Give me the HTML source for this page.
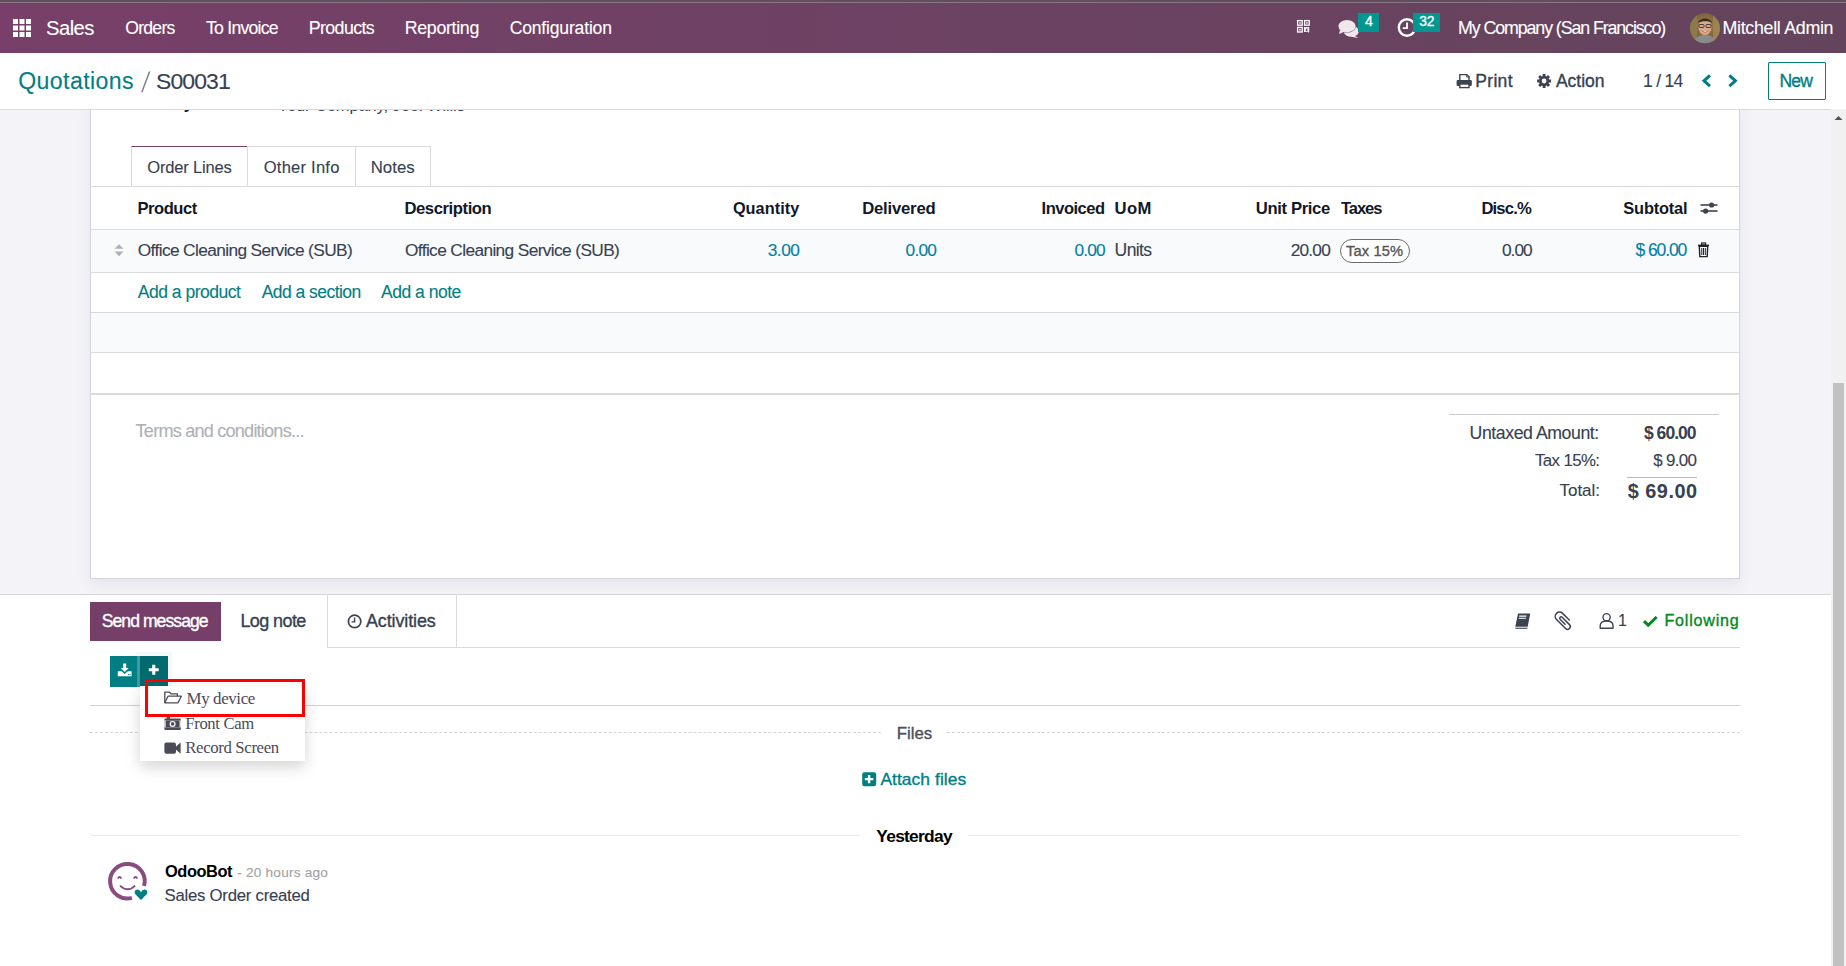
<!DOCTYPE html><html><head><meta charset='utf-8'><style>
*{margin:0;padding:0;box-sizing:border-box}
html,body{width:1846px;height:966px;overflow:hidden;background:#fff;font-family:'Liberation Sans',sans-serif}
.a{position:absolute}
.t{position:absolute;white-space:pre}
svg.a{overflow:visible}
</style></head><body><div class="a" style="left:0px;top:0px;width:1846px;height:2px;background:#634d5f"></div>
<div class="a" style="left:0px;top:2px;width:1846px;height:1px;background:#877883"></div>
<div class="a" style="left:0px;top:3px;width:1846px;height:50px;background:linear-gradient(to right,#773f69,#6d4263 50%,#64445c)"></div>
<svg class="a" style="left:0;top:0" width="40" height="53"><rect x="13.0" y="19.0" width="5" height="5" fill="#fff"/><rect x="13.0" y="25.5" width="5" height="5" fill="#fff"/><rect x="13.0" y="32.0" width="5" height="5" fill="#fff"/><rect x="19.5" y="19.0" width="5" height="5" fill="#fff"/><rect x="19.5" y="25.5" width="5" height="5" fill="#fff"/><rect x="19.5" y="32.0" width="5" height="5" fill="#fff"/><rect x="26.0" y="19.0" width="5" height="5" fill="#fff"/><rect x="26.0" y="25.5" width="5" height="5" fill="#fff"/><rect x="26.0" y="32.0" width="5" height="5" fill="#fff"/></svg>
<svg class="a" style="left:1296px;top:19px" width="16" height="15" viewBox="0 0 16 15">
<g fill="none" stroke="#fff" stroke-width="1.3">
<rect x="1.6" y="1.6" width="4.6" height="4.6"/><rect x="8.6" y="1.6" width="4.6" height="4.6"/><rect x="1.6" y="8.4" width="4.6" height="4.6"/>
</g>
<g fill="#fff"><rect x="3.2" y="3.2" width="1.5" height="1.5"/><rect x="10.2" y="3.2" width="1.5" height="1.5"/><rect x="3.2" y="10" width="1.5" height="1.5"/>
<rect x="8" y="8" width="1.8" height="5"/><rect x="9.8" y="8" width="1.5" height="1.8"/><rect x="11.4" y="8" width="1.8" height="5"/><rect x="9.8" y="12" width="1" height="1"/><rect x="12" y="12.5" width="1" height="1"/></g>
</svg>
<svg class="a" style="left:1336px;top:17px" width="26" height="22" viewBox="0 0 26 22">
<path d="M9 7 C15 6.5 21 9 22.5 13 C23.5 16 21 18.5 19 19 L22.5 21 L15 19.8 C12 19.8 9 18 8 16 Z" fill="#efe9ee"/>
<ellipse cx="11" cy="9.3" rx="8.8" ry="6.4" fill="#6b4561"/>
<ellipse cx="11" cy="9.2" rx="8.5" ry="6.2" fill="#efe9ee"/>
<path d="M4 13 L3 17 L9 14.5 Z" fill="#efe9ee"/>
</svg>
<div class="a" style="left:1358px;top:13px;width:21px;height:18.5px;background:#01968f"></div>
<svg class="a" style="left:1396px;top:16px" width="22" height="22" viewBox="0 0 22 22">
<circle cx="11" cy="11.5" r="8.2" fill="none" stroke="#fff" stroke-width="2.4"/>
<path d="M11 6.5 V12.2 H6.8" fill="none" stroke="#fff" stroke-width="1.8"/>
</svg>
<div class="a" style="left:1413px;top:13px;width:26.5px;height:18.5px;background:#01968f"></div>
<svg class="a" style="left:1689px;top:13px" width="32" height="31" viewBox="0 0 32 31">
<defs><clipPath id="av"><circle cx="16" cy="15.3" r="15"/></clipPath>
<radialGradient id="bgav" cx="0.5" cy="0.4" r="0.7"><stop offset="0" stop-color="#a8834f"/><stop offset="1" stop-color="#5e4a2e"/></radialGradient></defs>
<g clip-path="url(#av)">
<rect x="0" y="0" width="32" height="31" fill="url(#bgav)"/>
<rect x="0" y="0" width="8" height="31" fill="#8c7a4c"/>
<rect x="24" y="0" width="8" height="31" fill="#9a8550"/>
<path d="M4 31 C6 24 10 22 16 22 C22 22 26 24 28 31 Z" fill="#8a8a88"/>
<ellipse cx="16" cy="14" rx="6.5" ry="8" fill="#d9a98e"/>
<path d="M9 10 C10 4 22 4 23 10 C21 7.5 12 7.5 9 10 Z" fill="#3b2d25"/>
<rect x="10" y="11.5" width="5" height="3" rx="1" fill="none" stroke="#333" stroke-width="0.9"/>
<rect x="17" y="11.5" width="5" height="3" rx="1" fill="none" stroke="#333" stroke-width="0.9"/>
<path d="M12.5 18 Q16 20.5 19.5 18" fill="#fff" stroke="#8a4a3a" stroke-width="0.7"/>
</g></svg>
<div class="a" style="left:0px;top:109px;width:1831px;height:485px;background:#f4f3f8"></div>
<div class="a" style="left:90px;top:100px;width:1650px;height:479px;background:#fff;border:1px solid #d3d5db;box-shadow:0 6px 14px rgba(60,60,90,0.07)"></div>
<div class="a" style="left:91px;top:110px;width:1640px;height:7px;overflow:hidden">
<div class="t" style="left:39px;top:-15px;font-size:16.5px;line-height:16.5px;font-weight:700;color:#111827;letter-spacing:-0.2px">Delivery</div>
<div class="t" style="left:186.5px;top:-13px;font-size:16.5px;line-height:16.5px;color:#374151;letter-spacing:-0.1px">Your Company, Joel Willis</div>
</div>
<div class="a" style="left:131px;top:146px;width:117px;height:40px;background:#fff;border:1px solid #d8dadd;border-bottom:none;border-top:1px solid #763f69"></div>
<div class="a" style="left:247px;top:146px;width:109px;height:40px;border:1px solid #d8dadd;border-bottom:none"></div>
<div class="a" style="left:355px;top:146px;width:76px;height:40px;border:1px solid #d8dadd;border-bottom:none"></div>
<div class="a" style="left:91px;top:186px;width:1648px;height:1px;background:#d8dadd"></div>
<div class="a" style="left:91px;top:229px;width:1648px;height:1px;background:#d8dadd"></div>
<div class="a" style="left:91px;top:230px;width:1648px;height:42px;background:#f9fafb"></div>
<div class="a" style="left:91px;top:272px;width:1648px;height:1px;background:#d8dadd"></div>
<div class="a" style="left:91px;top:312px;width:1648px;height:1px;background:#d8dadd"></div>
<div class="a" style="left:91px;top:313px;width:1648px;height:39px;background:#f9fafb"></div>
<div class="a" style="left:91px;top:352px;width:1648px;height:1px;background:#d8dadd"></div>
<div class="a" style="left:91px;top:393px;width:1648px;height:2px;background:#d8dadd"></div>
<svg class="a" style="left:113px;top:243px" width="13" height="15"><path d="M1.5 5.8 L6 1.2 L10.5 5.8 Z M1.5 8.6 L6 13.2 L10.5 8.6 Z" fill="#adb1b9"/></svg>
<div class="a" style="left:1340px;top:239px;width:70px;height:24px;border:1.3px solid #6c6c6c;border-radius:12px;background:#fff"></div>
<svg class="a" style="left:1700px;top:200px" width="19" height="17" viewBox="0 0 19 17">
<rect x="0.5" y="4.2" width="17" height="1.6" fill="#3d4451"/><rect x="0.5" y="10.2" width="17" height="1.6" fill="#3d4451"/>
<circle cx="11.6" cy="5" r="2.6" fill="#3d4451"/><circle cx="5.6" cy="11.1" r="2.6" fill="#3d4451"/>
</svg>
<svg class="a" style="left:1697px;top:242px" width="14" height="16" viewBox="0 0 14 16">
<rect x="1" y="2.6" width="11" height="1.6" fill="#1f2329"/><rect x="4.6" y="1" width="4" height="2" fill="none" stroke="#1f2329" stroke-width="1.2"/>
<path d="M2.3 4.3 H10.7 L10.2 14.6 H2.8 Z" fill="none" stroke="#1f2329" stroke-width="1.4"/>
<rect x="4.3" y="6" width="1" height="7" fill="#1f2329"/><rect x="6" y="6" width="1" height="7" fill="#1f2329"/><rect x="7.8" y="6" width="1" height="7" fill="#1f2329"/>
</svg>
<div class="a" style="left:1449px;top:414px;width:270px;height:1px;background:#c9ccd2"></div>
<div class="a" style="left:1627px;top:477px;width:70px;height:1px;background:#b8bbc2"></div>
<div class="a" style="left:0px;top:53px;width:1846px;height:56px;background:#fff"></div>
<div class="a" style="left:0px;top:109px;width:1846px;height:1px;background:#d8dadd"></div>
<svg class="a" style="left:0;top:53px" width="200" height="56"><line x1="141.8" y1="39.2" x2="149.6" y2="18.4" stroke="#7b7f88" stroke-width="1.5"/></svg>
<svg class="a" style="left:1456px;top:73px" width="17" height="16" viewBox="0 0 17 16">
<path d="M3.8 7 V1.6 H10.8 L13 3.8 V7" fill="none" stroke="#3d4451" stroke-width="1.4"/>
<path d="M10.6 1.2 V4.2 H13.4" fill="none" stroke="#3d4451" stroke-width="0.8"/>
<rect x="0.6" y="7" width="15.2" height="6" rx="1.2" fill="#3d4451"/>
<rect x="3.8" y="11" width="9.2" height="3.6" fill="#fff" stroke="#3d4451" stroke-width="1.4"/>
</svg>
<svg class="a" style="left:1537px;top:74px" width="15" height="15" viewBox="0 0 15 15"><path d="M12.10 5.56 L14.06 5.59 L14.06 8.41 L12.10 8.44 L11.65 9.52 L13.02 10.92 L11.02 12.92 L9.62 11.55 L8.54 12.00 L8.51 13.96 L5.69 13.96 L5.66 12.00 L4.58 11.55 L3.18 12.92 L1.18 10.92 L2.55 9.52 L2.10 8.44 L0.14 8.41 L0.14 5.59 L2.10 5.56 L2.55 4.48 L1.18 3.08 L3.18 1.08 L4.58 2.45 L5.66 2.00 L5.69 0.04 L8.51 0.04 L8.54 2.00 L9.62 2.45 L11.02 1.08 L13.02 3.08 L11.65 4.48 Z M7.1 4.6 A2.4 2.4 0 1 0 7.1 9.4 A2.4 2.4 0 1 0 7.1 4.6 Z" fill="#3d4451" fill-rule="evenodd"/></svg>
<svg class="a" style="left:1700px;top:73px" width="40" height="16" viewBox="0 0 40 16">
<path d="M10 2.4 L4 7.8 L10 13.2" fill="none" stroke="#017e84" stroke-width="3" stroke-linejoin="miter"/>
<path d="M29.4 2.4 L35.4 7.8 L29.4 13.2" fill="none" stroke="#017e84" stroke-width="3" stroke-linejoin="miter"/>
</svg>
<div class="a" style="left:1768px;top:62px;width:58px;height:38px;border:1px solid #017e84;border-radius:1px"></div>
<div class="a" style="left:0px;top:594px;width:1831px;height:372px;background:#fff"></div>
<div class="a" style="left:0px;top:594px;width:1831px;height:1px;background:#d3d5db"></div>
<div class="a" style="left:90px;top:602px;width:131px;height:39px;background:#763f69"></div>
<div class="a" style="left:327px;top:594px;width:1px;height:53px;background:#d8dadd"></div>
<div class="a" style="left:456px;top:594px;width:1px;height:53px;background:#d8dadd"></div>
<div class="a" style="left:327px;top:647px;width:1413px;height:1px;background:#d8dadd"></div>
<svg class="a" style="left:346px;top:613px" width="17" height="17" viewBox="0 0 17 17">
<circle cx="8.6" cy="8.4" r="6.2" fill="none" stroke="#3d4451" stroke-width="1.7"/>
<path d="M8.6 4.6 V8.9 H5.6" fill="none" stroke="#3d4451" stroke-width="1.4"/>
</svg>
<svg class="a" style="left:1513px;top:612px" width="19" height="18" viewBox="0 0 19 18">
<path d="M5 1.6 H17.2 L14.6 15.2 H2.2 Z" fill="#3d4451"/>
<path d="M2.2 15.2 H14.6" stroke="#fff" stroke-width="0.9"/>
<path d="M2.4 16.3 H14.4" stroke="#3d4451" stroke-width="1"/>
<rect x="7" y="3.6" width="7.2" height="1.2" fill="#fff" transform="skewX(-11)"/>
<rect x="7" y="5.8" width="7.2" height="1" fill="#fff" transform="skewX(-11)"/>
</svg>
<svg class="a" style="left:1550px;top:607px" width="26" height="26" viewBox="0 0 26 26">
<path d="M19.23 13.0 L12.59 6.36 A4.3 4.3 0 0 0 6.51 12.45 L15.56 21.5 A2.75 2.75 0 0 0 19.45 17.61 L12.09 10.25 A1.4 1.4 0 0 0 10.11 12.23 L15.06 17.18" fill="none" stroke="#3d4451" stroke-width="1.5" stroke-linecap="round"/>
</svg>
<svg class="a" style="left:1598px;top:612px" width="18" height="18" viewBox="0 0 18 18">
<circle cx="8.6" cy="5.2" r="3.6" fill="none" stroke="#3d4451" stroke-width="1.4"/>
<path d="M2.2 16.3 V13.5 C2.2 10.6 4.8 9 8.6 9 C12.4 9 15 10.6 15 13.5 V16.3 Z" fill="none" stroke="#3d4451" stroke-width="1.4" stroke-linejoin="round"/>
</svg>
<svg class="a" style="left:1642px;top:614px" width="17" height="14" viewBox="0 0 17 14"><path d="M2 7.2 L6.2 11.2 L14.6 3" fill="none" stroke="#00891d" stroke-width="3"/></svg>
<div class="a" style="left:136px;top:652px;width:36px;height:38px;background:#f7f7f8"></div>
<div class="a" style="left:110px;top:656px;width:27px;height:31px;background:#017e84"></div>
<div class="a" style="left:137px;top:656px;width:3px;height:31px;background:#3d9a9e"></div>
<div class="a" style="left:140px;top:656px;width:28px;height:31px;background:#016a6f"></div>
<svg class="a" style="left:116px;top:662px" width="18" height="16" viewBox="0 0 18 16">
<path d="M7.2 1.6 H10.2 V6 H12.6 L8.7 10 L4.8 6 H7.2 Z" fill="#fff"/>
<path d="M1.8 9.2 H5.6 L8.7 12 L11.8 9.2 H15.6 V14.2 H1.8 Z" fill="#fff"/>
<rect x="12" y="12" width="1" height="1" fill="#017e84"/><rect x="13.6" y="12" width="1" height="1" fill="#017e84"/>
</svg>
<svg class="a" style="left:147px;top:663px" width="14" height="14"><path d="M5.2 1.8 H8.3 V5.2 H11.7 V8.3 H8.3 V11.7 H5.2 V8.3 H1.8 V5.2 H5.2 Z" fill="#fff"/></svg>
<div class="a" style="left:90px;top:705px;width:1650px;height:1px;background:#cfd1d6"></div>
<div class="a" style="left:90px;top:732px;width:791px;height:0;border-top:1px dashed #d3d5d9"></div>
<div class="a" style="left:947px;top:732px;width:793px;height:0;border-top:1px dashed #d3d5d9"></div>
<div class="a" style="left:90px;top:835px;width:770px;height:1px;background:#e7e9ed"></div>
<div class="a" style="left:968px;top:835px;width:772px;height:1px;background:#e7e9ed"></div>
<svg class="a" style="left:862px;top:772px" width="15" height="15" viewBox="0 0 15 15"><rect x="0.2" y="0.2" width="14" height="14" rx="2.2" fill="#017e84"/><path d="M5.9 2.9 H8.3 V5.9 H11.3 V8.3 H8.3 V11.3 H5.9 V8.3 H2.9 V5.9 H5.9 Z" fill="#fff"/></svg>
<div class="a" style="left:140px;top:686px;width:165px;height:75px;background:#fff;box-shadow:0 6px 14px rgba(0,0,0,0.17)"></div>
<svg class="a" style="left:163px;top:690px" width="20" height="15" viewBox="0 0 20 15">
<path d="M1.8 12.8 V2.2 H6.4 L8 3.8 H14.4 V6.2" fill="none" stroke="#4a4b57" stroke-width="1.3" stroke-linejoin="round"/>
<path d="M1.8 12.8 L5 6.2 H18.4 L15 12.8 Z" fill="none" stroke="#4a4b57" stroke-width="1.3" stroke-linejoin="round"/>
</svg>
<svg class="a" style="left:164px;top:716px" width="18" height="15" viewBox="0 0 18 15">
<rect x="0.4" y="2.6" width="16.4" height="11.4" rx="1" fill="#4a4b57"/>
<rect x="2.6" y="0.8" width="3.5" height="2" fill="#4a4b57"/>
<rect x="0.4" y="4.4" width="16.4" height="7" fill="#fff"/>
<rect x="1.6" y="4.4" width="14" height="7" fill="#4a4b57"/>
<circle cx="8.6" cy="7.9" r="3" fill="#fff"/><circle cx="8.6" cy="7.9" r="1.8" fill="#4a4b57"/>
</svg>
<svg class="a" style="left:164px;top:741px" width="18" height="14" viewBox="0 0 18 14">
<rect x="0.4" y="1.4" width="11.6" height="11.4" rx="2" fill="#4a4b57"/>
<path d="M11.6 6 L16.6 1.4 V12.8 L11.6 8.2 Z" fill="#4a4b57"/>
</svg>
<div class="a" style="left:145px;top:679px;width:160px;height:38px;border:3px solid #fe0000"></div>
<svg class="a" style="left:100px;top:855px" width="55" height="50" viewBox="0 0 55 50">
<path d="M44.03 30.97 A17.3 17.3 0 1 0 31.88 42.91" fill="none" stroke="#884d80" stroke-width="4"/>
<path d="M17.8 23.6 Q19.6 20.4 21.4 23.6 M33.7 23.6 Q35.5 20.4 37.3 23.6" fill="none" stroke="#884d80" stroke-width="1.8"/>
<path d="M20 30.6 Q27.5 38 35.2 30.6" fill="none" stroke="#884d80" stroke-width="1.9"/>
<path d="M41 45.8 L35.2 40 C33.4 38.2 33.6 35 36.2 34.2 C38.2 33.6 40 34.6 41 36.2 C42 34.6 43.8 33.6 45.8 34.2 C48.4 35 48.6 38.2 46.8 40 Z" fill="#017e84" stroke="#fff" stroke-width="1.2"/>
</svg>
<div class="t" style="left:46.00px;top:18.40px;font-size:20.28px;line-height:20.28px;letter-spacing:-0.565px;color:#ffffff;font-weight:400;font-family:'Liberation Sans', sans-serif;-webkit-text-stroke:0.12px #ffffff;">Sales</div>
<div class="t" style="left:125.20px;top:20.00px;font-size:17.57px;line-height:17.57px;letter-spacing:-0.698px;color:#ffffff;font-weight:400;font-family:'Liberation Sans', sans-serif;-webkit-text-stroke:0.12px #ffffff;">Orders</div>
<div class="t" style="left:206.00px;top:20.00px;font-size:17.70px;line-height:17.70px;letter-spacing:-0.778px;color:#ffffff;font-weight:400;font-family:'Liberation Sans', sans-serif;-webkit-text-stroke:0.12px #ffffff;">To Invoice</div>
<div class="t" style="left:308.70px;top:20.00px;font-size:17.83px;line-height:17.83px;letter-spacing:-0.612px;color:#ffffff;font-weight:400;font-family:'Liberation Sans', sans-serif;-webkit-text-stroke:0.12px #ffffff;">Products</div>
<div class="t" style="left:404.70px;top:20.00px;font-size:17.83px;line-height:17.83px;letter-spacing:-0.328px;color:#ffffff;font-weight:400;font-family:'Liberation Sans', sans-serif;-webkit-text-stroke:0.12px #ffffff;">Reporting</div>
<div class="t" style="left:509.70px;top:20.00px;font-size:17.57px;line-height:17.57px;letter-spacing:-0.183px;color:#ffffff;font-weight:400;font-family:'Liberation Sans', sans-serif;-webkit-text-stroke:0.12px #ffffff;">Configuration</div>
<div class="t" style="left:1458.00px;top:20.00px;font-size:17.83px;line-height:17.83px;letter-spacing:-1.106px;color:#ffffff;font-weight:400;font-family:'Liberation Sans', sans-serif;-webkit-text-stroke:0.12px #ffffff;">My Company (San Francisco)</div>
<div class="t" style="left:1722.50px;top:20.00px;font-size:17.83px;line-height:17.83px;letter-spacing:-0.301px;color:#ffffff;font-weight:400;font-family:'Liberation Sans', sans-serif;-webkit-text-stroke:0.12px #ffffff;">Mitchell Admin</div>
<div class="t" style="left:18.20px;top:70.00px;font-size:23.14px;line-height:23.14px;letter-spacing:0.391px;color:#017e84;font-weight:400;font-family:'Liberation Sans', sans-serif;-webkit-text-stroke:0.12px #017e84;">Quotations</div>
<div class="t" style="left:156.00px;top:70.00px;font-size:22.98px;line-height:22.98px;letter-spacing:-0.883px;color:#374151;font-weight:400;font-family:'Liberation Sans', sans-serif;-webkit-text-stroke:0.12px #374151;">S00031</div>
<div class="t" style="left:1475.30px;top:73.30px;font-size:17.54px;line-height:17.54px;letter-spacing:0.288px;color:#374151;font-weight:400;font-family:'Liberation Sans', sans-serif;-webkit-text-stroke:0.35px #374151;">Print</div>
<div class="t" style="left:1555.90px;top:73.30px;font-size:17.54px;line-height:17.54px;letter-spacing:-0.008px;color:#374151;font-weight:400;font-family:'Liberation Sans', sans-serif;-webkit-text-stroke:0.35px #374151;">Action</div>
<div class="t" style="left:1643.00px;top:73.30px;font-size:17.54px;line-height:17.54px;letter-spacing:-0.716px;color:#374151;font-weight:400;font-family:'Liberation Sans', sans-serif;-webkit-text-stroke:0.12px #374151;">1 / 14</div>
<div class="t" style="left:1779.40px;top:73.30px;font-size:17.54px;line-height:17.54px;letter-spacing:-0.795px;color:#017e84;font-weight:400;font-family:'Liberation Sans', sans-serif;-webkit-text-stroke:0.35px #017e84;">New</div>
<div class="t" style="left:147.30px;top:159.80px;font-size:16.57px;line-height:16.57px;letter-spacing:-0.205px;color:#374151;font-weight:400;font-family:'Liberation Sans', sans-serif;-webkit-text-stroke:0.12px #374151;">Order Lines</div>
<div class="t" style="left:263.70px;top:159.80px;font-size:16.57px;line-height:16.57px;letter-spacing:0.229px;color:#374151;font-weight:400;font-family:'Liberation Sans', sans-serif;-webkit-text-stroke:0.12px #374151;">Other Info</div>
<div class="t" style="left:370.70px;top:159.80px;font-size:16.81px;line-height:16.81px;letter-spacing:0.030px;color:#374151;font-weight:400;font-family:'Liberation Sans', sans-serif;-webkit-text-stroke:0.12px #374151;">Notes</div>
<div class="t" style="left:137.40px;top:200.80px;font-size:16.55px;line-height:16.55px;letter-spacing:-0.441px;color:#111827;font-weight:700;font-family:'Liberation Sans', sans-serif;">Product</div>
<div class="t" style="left:404.40px;top:200.80px;font-size:16.67px;line-height:16.67px;letter-spacing:-0.425px;color:#111827;font-weight:700;font-family:'Liberation Sans', sans-serif;">Description</div>
<div class="t" style="left:732.90px;top:199.80px;font-size:16.31px;line-height:16.31px;letter-spacing:0.038px;color:#111827;font-weight:700;font-family:'Liberation Sans', sans-serif;">Quantity</div>
<div class="t" style="left:862.20px;top:200.80px;font-size:16.67px;line-height:16.67px;letter-spacing:-0.190px;color:#111827;font-weight:700;font-family:'Liberation Sans', sans-serif;">Delivered</div>
<div class="t" style="left:1041.60px;top:200.80px;font-size:16.55px;line-height:16.55px;letter-spacing:-0.509px;color:#111827;font-weight:700;font-family:'Liberation Sans', sans-serif;">Invoiced</div>
<div class="t" style="left:1114.60px;top:200.80px;font-size:16.67px;line-height:16.67px;letter-spacing:0.349px;color:#111827;font-weight:700;font-family:'Liberation Sans', sans-serif;">UoM</div>
<div class="t" style="left:1255.80px;top:200.80px;font-size:16.67px;line-height:16.67px;letter-spacing:-0.376px;color:#111827;font-weight:700;font-family:'Liberation Sans', sans-serif;">Unit Price</div>
<div class="t" style="left:1341.00px;top:200.80px;font-size:16.55px;line-height:16.55px;letter-spacing:-1.063px;color:#111827;font-weight:700;font-family:'Liberation Sans', sans-serif;">Taxes</div>
<div class="t" style="left:1481.40px;top:200.80px;font-size:16.67px;line-height:16.67px;letter-spacing:-0.842px;color:#111827;font-weight:700;font-family:'Liberation Sans', sans-serif;">Disc.%</div>
<div class="t" style="left:1623.30px;top:199.80px;font-size:16.43px;line-height:16.43px;letter-spacing:-0.194px;color:#111827;font-weight:700;font-family:'Liberation Sans', sans-serif;">Subtotal</div>
<div class="t" style="left:137.80px;top:242.00px;font-size:17.29px;line-height:17.29px;letter-spacing:-0.616px;color:#374151;font-weight:400;font-family:'Liberation Sans', sans-serif;-webkit-text-stroke:0.12px #374151;">Office Cleaning Service (SUB)</div>
<div class="t" style="left:405.00px;top:242.00px;font-size:17.29px;line-height:17.29px;letter-spacing:-0.616px;color:#374151;font-weight:400;font-family:'Liberation Sans', sans-serif;-webkit-text-stroke:0.12px #374151;">Office Cleaning Service (SUB)</div>
<div class="t" style="left:767.80px;top:242.00px;font-size:17.29px;line-height:17.29px;letter-spacing:-0.534px;color:#0180a5;font-weight:400;font-family:'Liberation Sans', sans-serif;-webkit-text-stroke:0.12px #0180a5;">3.00</div>
<div class="t" style="left:905.60px;top:242.00px;font-size:17.29px;line-height:17.29px;letter-spacing:-0.801px;color:#0180a5;font-weight:400;font-family:'Liberation Sans', sans-serif;-webkit-text-stroke:0.12px #0180a5;">0.00</div>
<div class="t" style="left:1074.50px;top:242.00px;font-size:17.29px;line-height:17.29px;letter-spacing:-0.834px;color:#0180a5;font-weight:400;font-family:'Liberation Sans', sans-serif;-webkit-text-stroke:0.12px #0180a5;">0.00</div>
<div class="t" style="left:1114.60px;top:242.00px;font-size:17.54px;line-height:17.54px;letter-spacing:-0.612px;color:#374151;font-weight:400;font-family:'Liberation Sans', sans-serif;-webkit-text-stroke:0.12px #374151;">Units</div>
<div class="t" style="left:1290.80px;top:242.00px;font-size:17.29px;line-height:17.29px;letter-spacing:-0.826px;color:#374151;font-weight:400;font-family:'Liberation Sans', sans-serif;-webkit-text-stroke:0.12px #374151;">20.00</div>
<div class="t" style="left:1346.00px;top:244.00px;font-size:14.68px;line-height:14.68px;letter-spacing:0.137px;color:#555555;font-weight:400;font-family:'Liberation Sans', sans-serif;-webkit-text-stroke:0.35px #555555;">Tax 15%</div>
<div class="t" style="left:1502.00px;top:242.00px;font-size:17.29px;line-height:17.29px;letter-spacing:-1.001px;color:#374151;font-weight:400;font-family:'Liberation Sans', sans-serif;-webkit-text-stroke:0.12px #374151;">0.00</div>
<div class="t" style="left:1635.50px;top:242.00px;font-size:17.54px;line-height:17.54px;letter-spacing:-1.116px;color:#0180a5;font-weight:400;font-family:'Liberation Sans', sans-serif;-webkit-text-stroke:0.12px #0180a5;">$ 60.00</div>
<div class="t" style="left:137.80px;top:283.90px;font-size:17.54px;line-height:17.54px;letter-spacing:-0.500px;color:#017e84;font-weight:400;font-family:'Liberation Sans', sans-serif;-webkit-text-stroke:0.12px #017e84;">Add a product</div>
<div class="t" style="left:261.70px;top:283.90px;font-size:17.54px;line-height:17.54px;letter-spacing:-0.550px;color:#017e84;font-weight:400;font-family:'Liberation Sans', sans-serif;-webkit-text-stroke:0.12px #017e84;">Add a section</div>
<div class="t" style="left:381.00px;top:283.90px;font-size:17.54px;line-height:17.54px;letter-spacing:-0.499px;color:#017e84;font-weight:400;font-family:'Liberation Sans', sans-serif;-webkit-text-stroke:0.12px #017e84;">Add a note</div>
<div class="t" style="left:135.60px;top:422.00px;font-size:18.13px;line-height:18.13px;letter-spacing:-0.790px;color:#adb1b8;font-weight:400;font-family:'Liberation Sans', sans-serif;-webkit-text-stroke:0.12px #adb1b8;">Terms and conditions...</div>
<div class="t" style="left:1469.60px;top:425.00px;font-size:17.68px;line-height:17.68px;letter-spacing:-0.424px;color:#374151;font-weight:400;font-family:'Liberation Sans', sans-serif;-webkit-text-stroke:0.12px #374151;">Untaxed Amount:</div>
<div class="t" style="left:1644.00px;top:425.00px;font-size:17.55px;line-height:17.55px;letter-spacing:-0.998px;color:#374151;font-weight:700;font-family:'Liberation Sans', sans-serif;">$ 60.00</div>
<div class="t" style="left:1535.00px;top:452.80px;font-size:16.83px;line-height:16.83px;letter-spacing:-0.606px;color:#374151;font-weight:400;font-family:'Liberation Sans', sans-serif;-webkit-text-stroke:0.12px #374151;">Tax 15%:</div>
<div class="t" style="left:1653.30px;top:452.80px;font-size:16.96px;line-height:16.96px;letter-spacing:-0.694px;color:#374151;font-weight:400;font-family:'Liberation Sans', sans-serif;-webkit-text-stroke:0.12px #374151;">$ 9.00</div>
<div class="t" style="left:1559.50px;top:482.00px;font-size:16.98px;line-height:16.98px;letter-spacing:-0.009px;color:#374151;font-weight:400;font-family:'Liberation Sans', sans-serif;-webkit-text-stroke:0.12px #374151;">Total:</div>
<div class="t" style="left:1627.70px;top:481.50px;font-size:19.86px;line-height:19.86px;letter-spacing:0.521px;color:#374151;font-weight:700;font-family:'Liberation Sans', sans-serif;">$ 69.00</div>
<div class="t" style="left:101.70px;top:613.30px;font-size:17.59px;line-height:17.59px;letter-spacing:-0.944px;color:#ffffff;font-weight:400;font-family:'Liberation Sans', sans-serif;-webkit-text-stroke:0.35px #ffffff;">Send message</div>
<div class="t" style="left:240.40px;top:613.30px;font-size:17.97px;line-height:17.97px;letter-spacing:-0.564px;color:#374151;font-weight:400;font-family:'Liberation Sans', sans-serif;-webkit-text-stroke:0.35px #374151;">Log note</div>
<div class="t" style="left:366.00px;top:613.30px;font-size:17.97px;line-height:17.97px;letter-spacing:-0.123px;color:#374151;font-weight:400;font-family:'Liberation Sans', sans-serif;-webkit-text-stroke:0.35px #374151;">Activities</div>
<div class="t" style="left:1617.90px;top:612.40px;font-size:16.09px;line-height:16.09px;letter-spacing:0.000px;color:#374151;font-weight:400;font-family:'Liberation Sans', sans-serif;-webkit-text-stroke:0.12px #374151;">1</div>
<div class="t" style="left:1664.50px;top:612.40px;font-size:16.09px;line-height:16.09px;letter-spacing:0.778px;color:#008a1e;font-weight:400;font-family:'Liberation Sans', sans-serif;-webkit-text-stroke:0.35px #008a1e;">Following</div>
<div class="t" style="left:186.50px;top:691.00px;font-size:16.95px;line-height:16.95px;letter-spacing:-0.393px;color:#4a4b57;font-weight:400;font-family:'Liberation Serif', serif;">My device</div>
<div class="t" style="left:185.30px;top:715.50px;font-size:16.64px;line-height:16.64px;letter-spacing:-0.344px;color:#4a4b57;font-weight:400;font-family:'Liberation Serif', serif;">Front Cam</div>
<div class="t" style="left:185.30px;top:740.40px;font-size:16.77px;line-height:16.77px;letter-spacing:-0.363px;color:#4a4b57;font-weight:400;font-family:'Liberation Serif', serif;">Record Screen</div>
<div class="t" style="left:896.80px;top:725.90px;font-size:16.81px;line-height:16.81px;letter-spacing:-0.016px;color:#4b4f5c;font-weight:400;font-family:'Liberation Sans', sans-serif;-webkit-text-stroke:0.35px #4b4f5c;">Files</div>
<div class="t" style="left:880.40px;top:770.80px;font-size:17.39px;line-height:17.39px;letter-spacing:0.073px;color:#017e84;font-weight:400;font-family:'Liberation Sans', sans-serif;-webkit-text-stroke:0.35px #017e84;">Attach files</div>
<div class="t" style="left:876.30px;top:828.00px;font-size:17.39px;line-height:17.39px;letter-spacing:-0.730px;color:#000000;font-weight:700;font-family:'Liberation Sans', sans-serif;">Yesterday</div>
<div class="t" style="left:165.00px;top:862.90px;font-size:16.43px;line-height:16.43px;letter-spacing:-0.449px;color:#000000;font-weight:700;font-family:'Liberation Sans', sans-serif;">OdooBot</div>
<div class="t" style="left:237.20px;top:865.90px;font-size:13.62px;line-height:13.62px;letter-spacing:0.224px;color:#a2a2a4;font-weight:400;font-family:'Liberation Sans', sans-serif;-webkit-text-stroke:0.12px #a2a2a4;">- 20 hours ago</div>
<div class="t" style="left:164.60px;top:887.80px;font-size:16.74px;line-height:16.74px;letter-spacing:-0.251px;color:#374151;font-weight:400;font-family:'Liberation Sans', sans-serif;-webkit-text-stroke:0.12px #374151;">Sales Order created</div>
<div class="t" style="left:1365.10px;top:14.00px;font-size:14.06px;line-height:14.06px;letter-spacing:0.000px;color:#ffffff;font-weight:400;font-family:'Liberation Sans', sans-serif;-webkit-text-stroke:0.35px #ffffff;">4</div>
<div class="t" style="left:1419.30px;top:15.00px;font-size:13.86px;line-height:13.86px;letter-spacing:-0.299px;color:#ffffff;font-weight:400;font-family:'Liberation Sans', sans-serif;-webkit-text-stroke:0.35px #ffffff;">32</div>
<div class="a" style="left:1831px;top:109px;width:15px;height:857px;background:#f1f1f1"></div>
<div class="a" style="left:1833px;top:383px;width:11px;height:583px;background:#c1c1c1"></div>
<svg class="a" style="left:1831px;top:109px" width="15" height="17"><path d="M3.5 11 L7.5 7 L11.5 11 Z" fill="#505050"/></svg>
</body></html>
